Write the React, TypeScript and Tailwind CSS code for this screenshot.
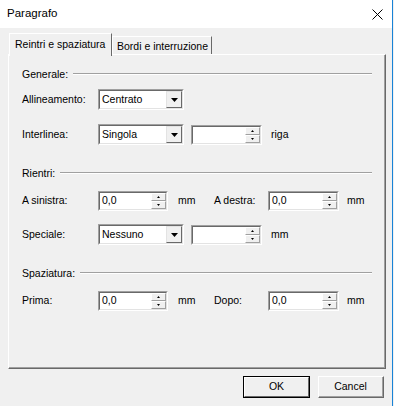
import React from "react";

const font = { fontFamily: '"Liberation Sans", Arial, sans-serif' };

function DownTri({ w = 7, h = 4 }: { w?: number; h?: number }) {
  return (
    <svg width={w} height={h} viewBox={`0 0 ${w} ${h}`}>
      <polygon points={`0,0 ${w},0 ${w / 2},${h}`} fill="#000" />
    </svg>
  );
}
function UpTri({ w = 5, h = 3 }: { w?: number; h?: number }) {
  return (
    <svg width={w} height={h} viewBox={`0 0 ${w} ${h}`}>
      <polygon points={`0,${h} ${w},${h} ${w / 2},0`} fill="#000" />
    </svg>
  );
}

function Sunken({ className, children }: { className: string; children?: React.ReactNode }) {
  return (
    <div className={`border border-t-[#a0a0a0] border-l-[#a0a0a0] border-b-white border-r-white ${className}`}>
      <div className="w-full h-full border border-t-[#696969] border-l-[#696969] border-b-[#e3e3e3] border-r-[#e3e3e3] bg-white flex">
        {children}
      </div>
    </div>
  );
}

function Select({ value }: { value: string }) {
  return (
    <Sunken className="w-[86px] h-[21px]">
      <div className="flex-1 flex items-center pl-[2px] text-black">{value}</div>
      <div className="w-[16px] h-full border border-t-[#e3e3e3] border-l-[#e3e3e3] border-b-[#696969] border-r-[#696969] bg-[#f0f0f0] flex items-center justify-center">
        <DownTri w={7} h={4} />
      </div>
    </Sunken>
  );
}

function Spin({ value, w = "w-[70px]" }: { value?: string; w?: string }) {
  return (
    <Sunken className={`${w} h-[20px]`}>
      <div className="flex-1 flex items-center pl-[2px] text-black">{value ?? ""}</div>
      <div className="w-[15px] h-full flex flex-col">
        <div className="flex-1 border border-t-white border-l-white border-b-[#a0a0a0] border-r-[#a0a0a0] bg-[#f0f0f0] flex items-center justify-center">
          <UpTri w={3} h={2} />
        </div>
        <div className="flex-1 border border-t-white border-l-white border-b-[#a0a0a0] border-r-[#a0a0a0] bg-[#f0f0f0] flex items-center justify-center">
          <DownTri w={3} h={2} />
        </div>
      </div>
    </Sunken>
  );
}

function Heading({ text }: { text: string }) {
  return (
    <div className="h-[14px] flex items-center">
      <span className="text-black leading-none">{text}</span>
      <div className="flex-1 ml-[5px] h-[2px] border-t border-t-[#a0a0a0] border-b border-b-white" />
    </div>
  );
}

function Label({ text }: { text: string }) {
  return <span className="w-[76px] shrink-0 text-black">{text}</span>;
}

export default function App() {
  return (
    <div className="w-[394px] h-[406px] flex bg-[#f0f0f0] text-[10.5px]" style={font}>
      <div className="w-[392px] flex flex-col">
        {/* Title bar */}
        <div className="h-[28px] bg-white flex items-center justify-between pl-[7px] pr-[9px]">
          <span className="text-[11.5px] text-black">Paragrafo</span>
          <svg width="11" height="11" viewBox="0 0 11 11">
            <line x1="0.5" y1="0.5" x2="10.5" y2="10.5" stroke="#000" strokeWidth="1" />
            <line x1="10.5" y1="0.5" x2="0.5" y2="10.5" stroke="#000" strokeWidth="1" />
          </svg>
        </div>

        {/* Body */}
        <div className="flex-1 flex flex-col pl-[8px] pr-[6px] pt-[5px]">
          {/* Tabs */}
          <div className="relative z-10 flex items-end h-[23px] -mb-[2px] pl-[1px]">
            <div className="h-[23px] w-[103px] bg-[#f0f0f0] border-t border-l border-t-white border-l-white border-r border-r-[#696969] pl-[5px] pt-[3px] text-black">
              Reintri e spaziatura
            </div>
            <div className="h-[18px] mb-[2px] w-[100px] border-t border-l border-t-white border-l-white border-r border-r-[#696969] pl-[4px] pt-[2px] text-black">
              Bordi e interruzione
            </div>
          </div>
          {/* Panel */}
          <div className="w-[378px] h-[315px] border border-t-white border-l-white border-r-[#696969] border-b-[#696969]">
            <div className="w-full h-full border-r border-b border-r-[#a0a0a0] border-b-[#a0a0a0] pl-[13px] pr-[12px] pt-[12px] flex flex-col">
              <Heading text="Generale:" />
              <div className="mt-[8px] h-[21px] flex items-center">
                <Label text="Allineamento:" />
                <Select value="Centrato" />
              </div>
              <div className="mt-[14px] h-[21px] flex items-center">
                <Label text="Interlinea:" />
                <Select value="Singola" />
                <div className="ml-[7px]">
                  <Spin w="w-[71px]" />
                </div>
                <span className="ml-[9px] text-black">riga</span>
              </div>

              <div className="mt-[21px]">
                <Heading text="Rientri:" />
              </div>
              <div className="mt-[10px] h-[21px] flex items-center">
                <Label text="A sinistra:" />
                <Spin value="0,0" />
                <span className="ml-[10px] w-[36px] text-black">mm</span>
                <span className="w-[54px] text-black">A destra:</span>
                <Spin value="0,0" w="w-[71px]" />
                <span className="ml-[8px] text-black">mm</span>
              </div>
              <div className="mt-[13px] h-[21px] flex items-center">
                <Label text="Speciale:" />
                <Select value="Nessuno" />
                <div className="ml-[7px]">
                  <Spin w="w-[71px]" />
                </div>
                <span className="ml-[9px] text-black">mm</span>
              </div>

              <div className="mt-[21px]">
                <Heading text="Spaziatura:" />
              </div>
              <div className="mt-[10px] h-[21px] flex items-center">
                <Label text="Prima:" />
                <Spin value="0,0" />
                <span className="ml-[10px] w-[36px] text-black">mm</span>
                <span className="w-[54px] text-black">Dopo:</span>
                <Spin value="0,0" w="w-[71px]" />
                <span className="ml-[8px] text-black">mm</span>
              </div>
            </div>
          </div>

          {/* Buttons */}
          <div className="mt-[7px] flex justify-end gap-[8px] pr-[2px]">
            <div className="w-[67px] h-[22px] border border-[#000]">
              <div className="w-full h-full border border-t-white border-l-white border-b-[#696969] border-r-[#696969] bg-[#f0f0f0] flex items-center justify-center text-black">
                OK
              </div>
            </div>
            <div className="w-[66px] h-[22px] border border-t-white border-l-white border-b-[#696969] border-r-[#696969]">
              <div className="w-full h-full border-r border-b border-r-[#a0a0a0] border-b-[#a0a0a0] bg-[#f0f0f0] flex items-center justify-center text-black">
                Cancel
              </div>
            </div>
          </div>
        </div>
      </div>
      <div className="w-[1px] bg-[#1883d7]" />
      <div className="w-[1px]" />
    </div>
  );
}
